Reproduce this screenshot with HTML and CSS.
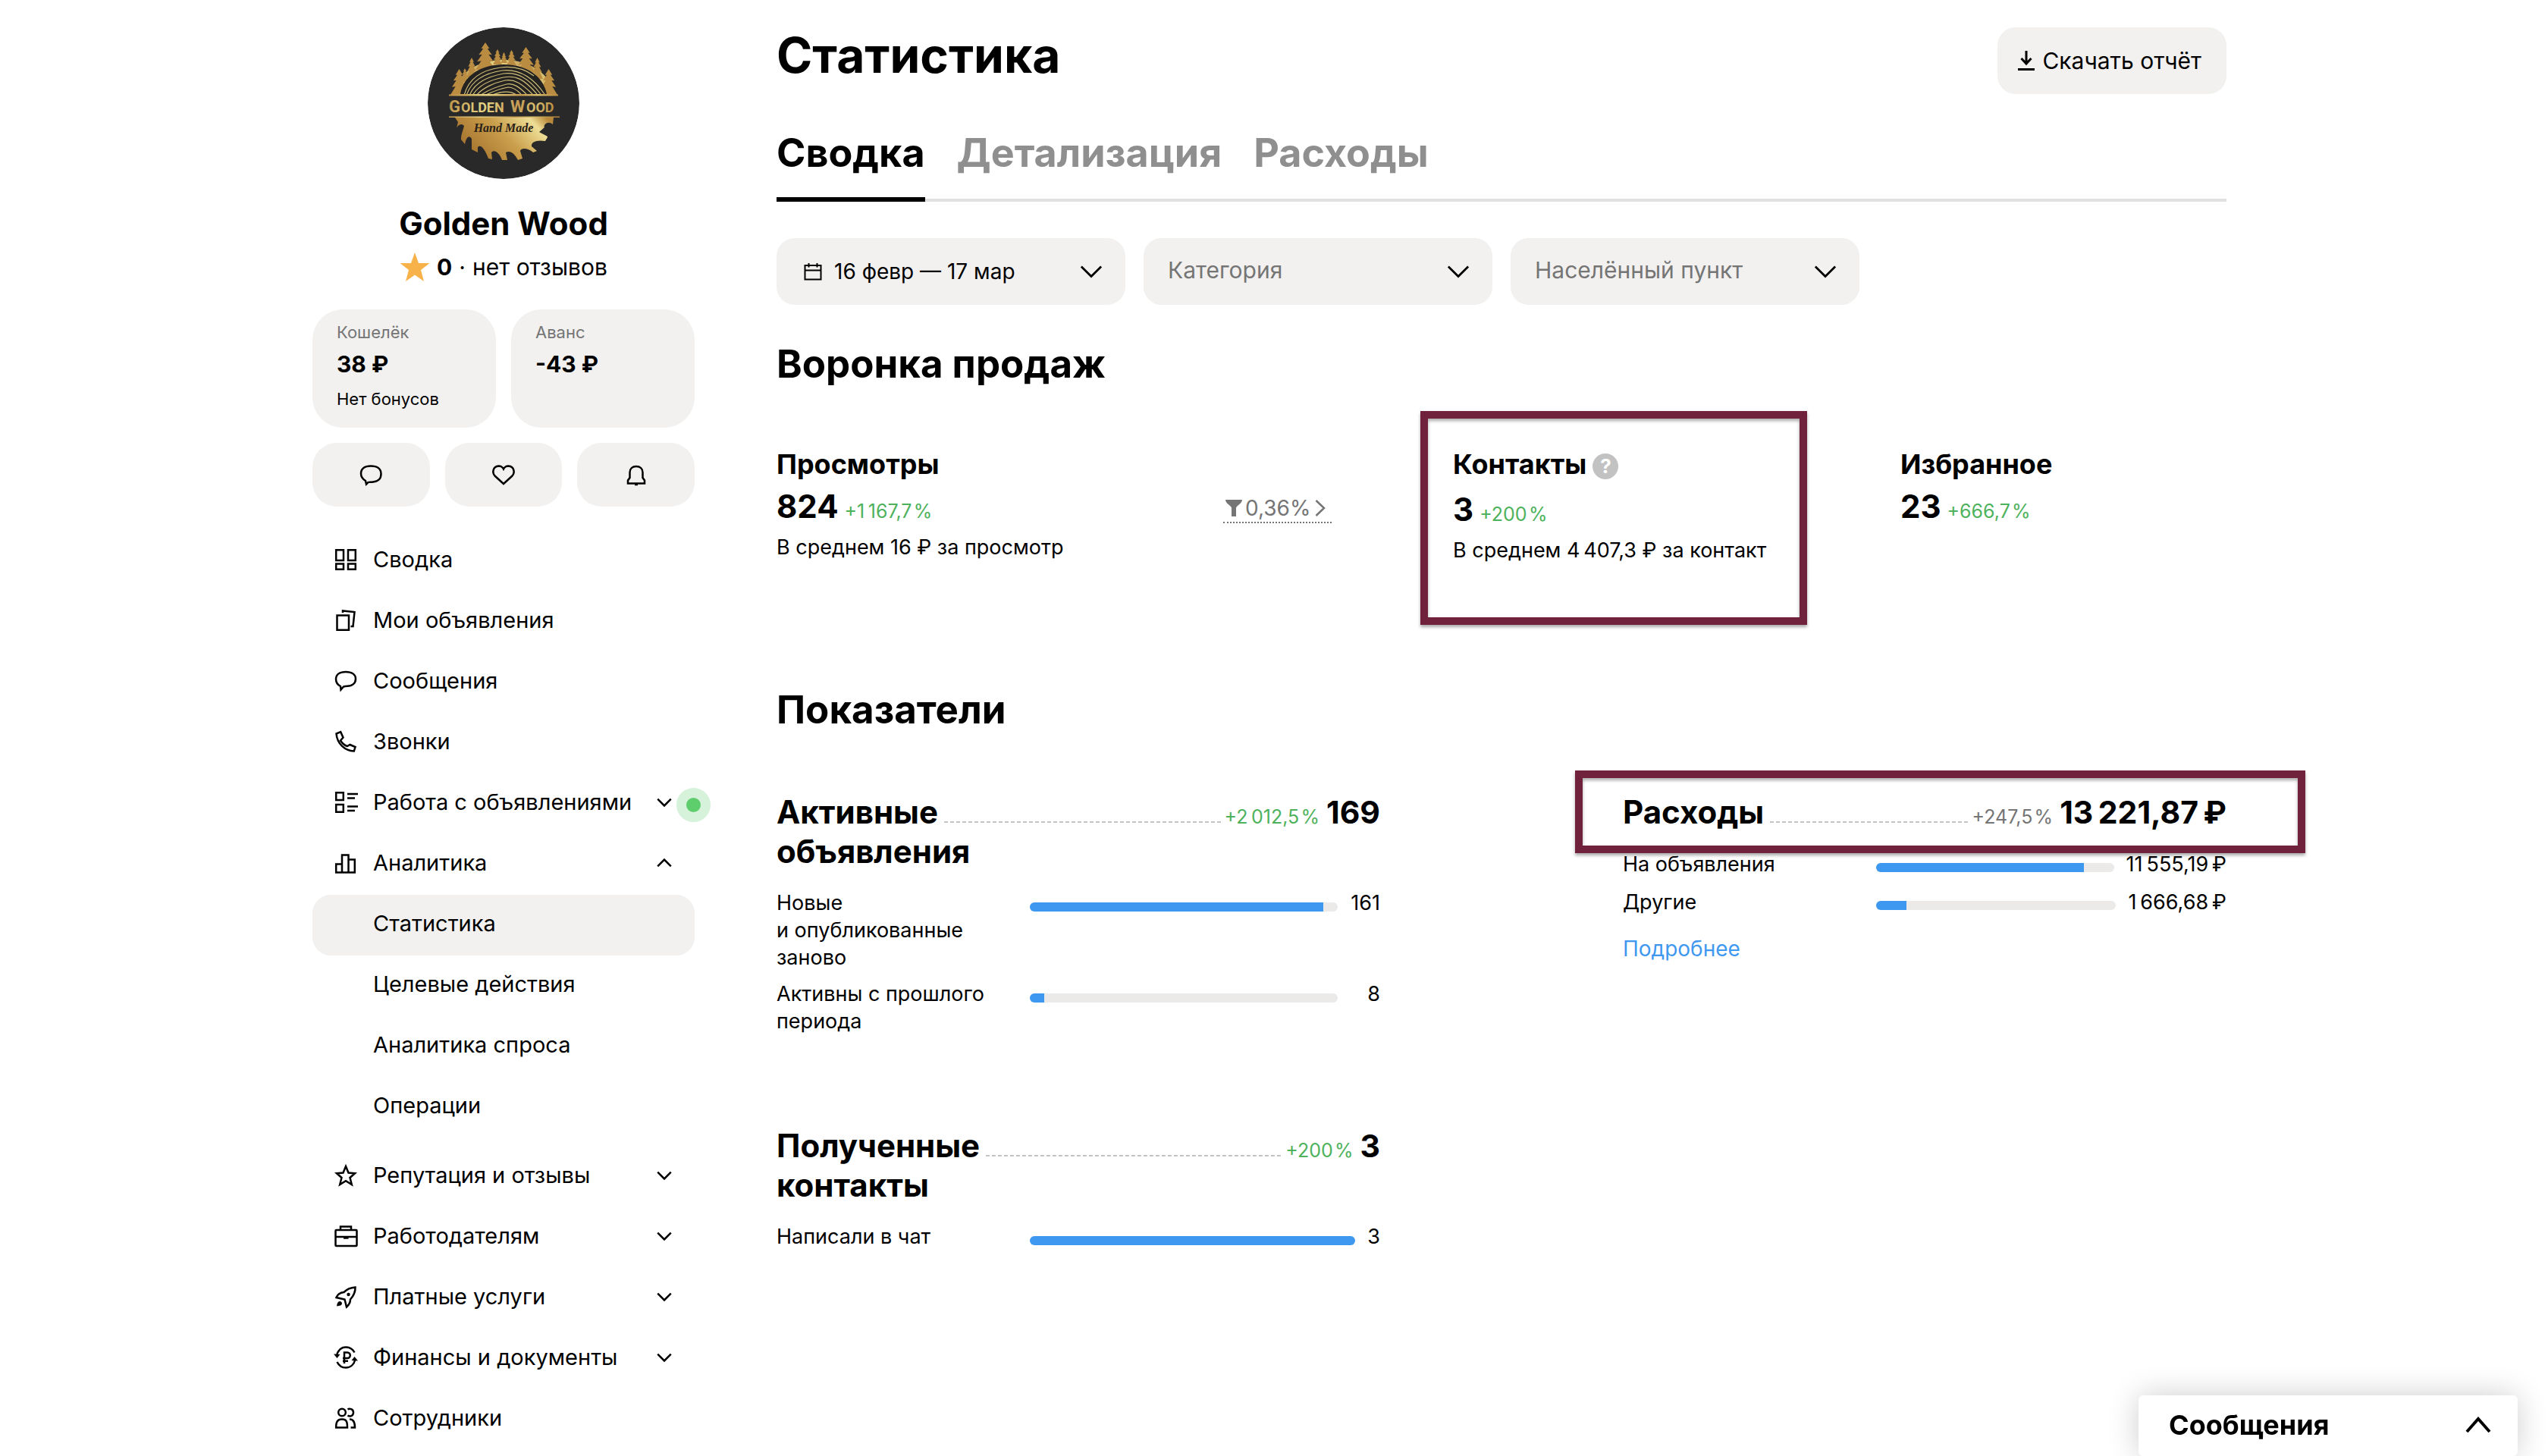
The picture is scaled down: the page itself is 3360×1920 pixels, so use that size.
FILE: index.html
```html
<!DOCTYPE html>
<html lang="ru">
<head>
<meta charset="utf-8">
<meta name="viewport" content="width=device-width, initial-scale=1">
<title>Статистика</title>
<link rel="stylesheet" href="styles.css">
</head>
<body>
<svg class="sprite" aria-hidden="true">
  <symbol id="i-bubble" viewBox="0 0 32 32"><path d="M9 23C5 21 3 17.500 3 13.500C3 7.500 8 4 16 4S29 7.500 29 13.200S24.500 22.800 18 22.800C16 22.800 14.500 23 13 23.500L9.500 27.500Z"/></symbol>
  <symbol id="i-down" viewBox="0 0 32 32"><path d="M2 9L16 23L30 9"/></symbol>
  <symbol id="tree" viewBox="0 0 24 40" preserveAspectRatio="none"><path d="M12 0L17 9L14.500 9L20 18L16 17.500L22 28L17 27L24 40H0L7 27L2 28L8 17.500L4 18L9.500 9L7 9Z"/></symbol>
</svg>
<div class="page">
  <aside class="sidebar">
    <svg class="avatar" viewBox="0 0 200 200" role="img" aria-label="Golden Wood Hand Made">
      <defs>
        <linearGradient id="gold" gradientUnits="userSpaceOnUse" x1="30" y1="70" x2="170" y2="110">
          <stop offset="0" stop-color="#b98c42"/><stop offset=".35" stop-color="#e6d584"/><stop offset=".65" stop-color="#c49a52"/><stop offset=".8" stop-color="#d9bf70"/><stop offset="1" stop-color="#b58438"/>
        </linearGradient>
        <linearGradient id="goldSaw" x1="0" y1="0.600" x2="1" y2="0.200">
          <stop offset="0" stop-color="#a3702c"/><stop offset=".5" stop-color="#c99e4b"/><stop offset=".85" stop-color="#eede95"/><stop offset="1" stop-color="#b98a3c"/>
        </linearGradient>
        <clipPath id="log"><path d="M43 88C47 64 70 49 100 49S152 64 157 88Z"/></clipPath>
      </defs>
      <circle cx="100" cy="100" r="100" fill="#292929"/>
      <g fill="url(#gold)">
        <path d="M34 90C38 60 66 43 100 43S162 60 167 90Z"/>
        <use href="#tree" x="63" y="20" width="26" height="36"/>
        <use href="#tree" x="117" y="26" width="25" height="34"/>
        <use href="#tree" x="86" y="29" width="12" height="20"/>
        <use href="#tree" x="96" y="33" width="9" height="14"/>
        <use href="#tree" x="104" y="30" width="13" height="20"/>
        <use href="#tree" x="51" y="40" width="14" height="26"/>
        <use href="#tree" x="137" y="40" width="15" height="28"/>
        <use href="#tree" x="44" y="54" width="10" height="18"/>
        <use href="#tree" x="30" y="55" width="23" height="34"/>
        <use href="#tree" x="148" y="55" width="23" height="34"/>
        <path d="M28 88.500H172V90.500H28ZM28 117.500H174V119H28Z"/>
      </g>
      <path d="M43 88C47 64 70 49 100 49S152 64 157 88Z" fill="#242321"/>
      <g clip-path="url(#log)" fill="none" stroke="#cfbd78" stroke-width="1.200">
        <path d="M48 90C54 66 74 56 96 53C112 51 128 55 140 64"/><path d="M51 90C58 68 78 60 98 57C116 55 136 62 154 88"/><path d="M55 90C62 72 80 65 100 61C118 59 132 66 149 88"/><path d="M59 90C67 76 84 69 100 66C116 63 127 68 144 88"/><path d="M64 90C72 80 88 73 102 70C114 68 124 74 138 88"/><path d="M69 90C80 82 92 78 104 75C113 73 121 79 130 88"/><path d="M75 90C87 84 96 81 106 79C113 79 118 83 123 88"/><path d="M83 90C95 85 108 83 117 89"/>
      </g>
      <g class="logo-name" fill="url(#gold)"><text x="28" y="112" font-size="22">G</text><text x="44" y="112" font-size="18">OLDEN</text><text x="109" y="112" font-size="22">W</text><text x="130" y="112" font-size="18">OOD</text></g>
      <path fill="url(#goldSaw)" d="M36 119H166L165 128C158 122 152 129 154 132L147 138C151 141 159 143 158 145L155 150C144 148 136 151 137 157L144 163L139 165C133 160 124 158 122 163L125 173L119 175C114 166 109 162 103 165L105 175H98C95 166 88 160 84 165L85 174L80 173C75 160 70 154 66 158V165L58 161V147C55 142 52 144 50 150L49 154L44 148C44 141 46 138 48 130C44 126 40 129 38 133L40 125Z"/>
      <text class="logo-script" x="100" y="138" text-anchor="middle" font-size="16" fill="#292118">Hand Made</text>
    </svg>
    <h2 class="seller">Golden Wood</h2>
    <p class="rating">
      <svg class="rating-star" viewBox="0 0 40 40" aria-hidden="true"><path d="M20 1L25 15H39.500L28 24L32 39L20 30.500L8 39L12 24L.5 15H15Z" fill="#f8b24a"/></svg>
      <b>0</b><span>·</span><span>нет отзывов</span>
    </p>
    <div class="wallets">
      <section class="wallet"><span class="wallet-label">Кошелёк</span><b class="wallet-sum">38 ₽</b><span class="wallet-note">Нет бонусов</span></section>
      <section class="wallet"><span class="wallet-label">Аванс</span><b class="wallet-sum">-43 ₽</b></section>
    </div>
    <div class="quick">
      <button type="button" aria-label="Сообщения"><svg class="icon" viewBox="0 0 32 32"><path d="M9 24C4 21 3 18 3 14.500C3 8 8 4.500 16 4.500S29.500 8 29.500 15S26 24.500 19 25.500C16 26 13.500 25.500 12.500 26L10 28.500Z"/></svg></button>
      <button type="button" aria-label="Избранное"><svg class="icon" viewBox="0 0 32 32"><path d="M16 28L4.500 17.500C.8 13.500 1.800 5 9.500 4.500C13 4.500 15 6.500 16 8.500C17 6.500 19 4.500 22.500 4.500C30.200 5 31.200 13.500 27.500 17.500Z"/></svg></button>
      <button type="button" aria-label="Уведомления"><svg class="icon" viewBox="0 0 32 32"><path d="M7.500 13C7.500 8 11 5 16 5S24.500 8 24.500 13V20L27 23.500V27.500H5V23.500L7.500 20Z"/><path d="M14 29H18"/></svg></button>
    </div>
    <nav class="menu" aria-label="Личный кабинет">
      <a href="#"><svg class="icon" viewBox="0 0 32 32"><path d="M3.200 3.200H13V17H3.200ZM19 3.200H28.800V17H19ZM3.200 21.500H13V28.800H3.200ZM19 21.500H28.800V28.800H19Z"/></svg><span>Сводка</span></a>
      <a href="#"><svg class="icon" viewBox="0 0 32 32"><path d="M4.500 9.500H20V28.800H4.500Z"/><path d="M12 6V3.500L27.500 5L25.500 24H22.500"/></svg><span>Мои объявления</span></a>
      <a href="#"><svg class="icon"><use href="#i-bubble"/></svg><span>Сообщения</span></a>
      <a href="#"><svg class="icon" viewBox="0 0 32 32"><path d="M3.500 5.500L9.200 3.200L12.500 10.500L9 14.500C11.500 18.500 14.500 21 18 22L21.500 20L28.500 23L26.800 28.500C15 28 4.500 19 3.500 5.500Z"/></svg><span>Звонки</span></a>
      <a href="#"><svg class="icon" viewBox="0 0 32 32"><path d="M3.200 3.200H12.800V13H3.200ZM3.200 19H12.800V28.800H3.200ZM18 5H32M18 10.500H28M18 21.500H32M18 27H28"/></svg><span>Работа с объявлениями</span><svg class="chev"><use href="#i-down"/></svg><i class="pulse"></i></a>
      <a href="#"><svg class="icon" viewBox="0 0 32 32"><path d="M11 28.500H3.200V17.500H11M11 28.500V5.500H19.500V28.500ZM19.500 11.500H27.800V28.500H19.500"/></svg><span>Аналитика</span><svg class="chev up"><use href="#i-down"/></svg></a>
      <div class="submenu">
        <a class="active" href="#" aria-current="page">Статистика</a>
        <a href="#">Целевые действия</a>
        <a href="#">Аналитика спроса</a>
        <a href="#">Операции</a>
      </div>
      <a href="#"><svg class="icon" viewBox="0 0 32 32"><path d="M16 4L19.500 12.500L28 13.200L21.500 19L23.800 28L16 23.200L8.200 28L10.500 19L4 13.200L12.500 12.500Z"/></svg><span>Репутация и отзывы</span><svg class="chev"><use href="#i-down"/></svg></a>
      <a href="#"><svg class="icon" viewBox="0 0 32 32"><rect x="2.500" y="8" width="28" height="21" rx="1"/><path d="M9 8V3.500H23V8M2.500 17H30.500M13 18.500H19.500"/></svg><span>Работодателям</span><svg class="chev"><use href="#i-down"/></svg></a>
      <a href="#"><svg class="icon" viewBox="0 0 32 32"><path d="M28.500 3.500C22 4 18 5.500 13.500 10C9 10.500 5 13 3.500 17L14.500 19.500L17 29.500C21 26 22 22.500 22 19.500C26.500 14.500 28.800 10 28.500 3.500Z"/><path class="solid" d="M8 22C12 22.500 11.500 26.500 9 27.500L4 28.500C4.500 25.500 5 22.500 8 22Z"/><circle class="solid" cx="19.500" cy="13" r="2.200"/></svg><span>Платные услуги</span><svg class="chev"><use href="#i-down"/></svg></a>
      <a href="#"><svg class="icon" viewBox="0 0 32 32"><path d="M4 14C5 7 10 2.500 16 2.500C21 2.500 25 5 27.500 9.500M28.500 18.500C27 25 22.500 29.500 16 29.500C10.500 29.500 7 27 4.500 22"/><path d="M14 24V9.500H18C23 9.500 23 17 18 17H12M12 20.800H19"/><path class="solid" d="M0 11.500L8.500 12L4.500 17ZM32 20.500L23.500 20L27.500 15Z"/></svg><span>Финансы и документы</span><svg class="chev"><use href="#i-down"/></svg></a>
      <a href="#"><svg class="icon" viewBox="0 0 32 32"><circle cx="11" cy="8.500" r="4.800"/><path d="M3.200 28.500C3 21 5 17.500 11 17.500S18 21 18 28.500ZM18.500 4.500C20.500 3 26 3.500 26 8.500C26 13.500 21 14.500 18.500 12.500M21 17.500C26 17.500 28 21 28 28.500H22.500"/></svg><span>Сотрудники</span></a>
    </nav>
  </aside>

  <main class="main">
    <header class="top">
      <h1>Статистика</h1>
      <button class="download" type="button"><svg class="icon-dl" viewBox="0 0 22 28" aria-hidden="true"><path d="M11 1V18M4.500 11L11 18L17.500 11M0 25.500H22"/></svg>Скачать отчёт</button>
    </header>
    <nav class="tabs" aria-label="Разделы статистики"><a class="current" href="#" aria-current="page">Сводка</a><a href="#">Детализация</a><a href="#">Расходы</a></nav>
    <div class="filters">
      <button class="filter filter-date" type="button"><svg class="icon-cal" viewBox="0 0 24 24" aria-hidden="true"><path d="M1.500 4H22.500V22.500H1.500ZM1.500 10.500H22.500M6.500 1V6.500M17.500 1V6.500"/></svg><span>16 февр — 17 мар</span><svg class="arrow"><use href="#i-down"/></svg></button>
      <label class="filter"><select aria-label="Категория"><option>Категория</option></select><svg class="arrow"><use href="#i-down"/></svg></label>
      <label class="filter"><select aria-label="Населённый пункт"><option>Населённый пункт</option></select><svg class="arrow"><use href="#i-down"/></svg></label>
    </div>

    <h2>Воронка продаж</h2>
    <div class="funnel">
      <section class="step">
        <h3>Просмотры</h3>
        <p class="figure"><b>824</b><span class="delta">+1&thinsp;167,7&hairsp;%</span></p>
        <p class="note">В среднем 16 ₽ за просмотр</p>
      </section>
      <a class="conversion" href="#"><svg class="icon-funnel" viewBox="0 0 22 22" aria-hidden="true"><path d="M0 0H22C22 5 14 8 14 11V22H8V11C8 8 0 5 0 0Z"/></svg>0,36%<svg class="icon-next" viewBox="0 0 14 22" aria-hidden="true"><path d="M1.500 1L12 11L1.500 21"/></svg></a>
      <section class="step marked">
        <h3>Контакты <button class="help" type="button" aria-label="Подсказка">?</button></h3>
        <p class="figure"><b>3</b><span class="delta">+200&hairsp;%</span></p>
        <p class="note">В среднем 4&thinsp;407,3 ₽ за контакт</p>
      </section>
      <section class="step">
        <h3>Избранное</h3>
        <p class="figure"><b>23</b><span class="delta">+666,7&hairsp;%</span></p>
      </section>
    </div>

    <h2>Показатели</h2>
    <div class="metrics">
      <div class="column">
        <section class="metric">
          <div class="metric-head"><h3><span>Активные</span> <span class="second">объявления</span></h3><i class="leader"></i><span class="delta">+2&thinsp;012,5&hairsp;%</span><b>169</b></div>
          <div class="row"><span class="row-label">Новые и&nbsp;опубликованные заново</span><span class="bar"><i style="width:95.3%"></i></span><span class="row-value">161</span></div>
          <div class="row"><span class="row-label">Активны с&nbsp;прошлого периода</span><span class="bar"><i style="width:4.7%"></i></span><span class="row-value">8</span></div>
        </section>
        <section class="metric">
          <div class="metric-head"><h3><span>Полученные</span> <span class="second">контакты</span></h3><i class="leader"></i><span class="delta">+200&hairsp;%</span><b>3</b></div>
          <div class="row"><span class="row-label">Написали в чат</span><span class="bar"><i style="width:100%"></i></span><span class="row-value short">3</span></div>
        </section>
      </div>
      <div class="column">
        <section class="metric money">
          <div class="metric-head marked-line"><h3><span>Расходы</span></h3><i class="leader"></i><span class="delta muted">+247,5&hairsp;%</span><b>13&thinsp;221,87&thinsp;₽</b></div>
          <div class="row"><span class="row-label">На объявления</span><span class="bar"><i style="width:87.4%"></i></span><span class="row-value">11&thinsp;555,19&thinsp;₽</span></div>
          <div class="row"><span class="row-label">Другие</span><span class="bar"><i style="width:12.6%"></i></span><span class="row-value">1&thinsp;666,68&thinsp;₽</span></div>
          <a class="more" href="#">Подробнее</a>
        </section>
      </div>
    </div>
  </main>
</div>
<button class="chat" type="button"><span>Сообщения</span><svg class="chat-arrow" viewBox="0 0 34 22" aria-hidden="true"><path d="M2 20L17 3L32 20"/></svg></button>
</body>
</html>
```
FILE: styles.css
```css
*, *::before, *::after { box-sizing: border-box; }
body { margin: 0; background: #fff; color: #000; font-family: Inter, "Noto Sans", sans-serif; font-size: 28px; line-height: 36px; }
h1, h2, h3, p { margin: 0; }
a { color: inherit; text-decoration: none; }
b { font-weight: 700; }
button, select { font: inherit; color: inherit; border: 0; margin: 0; background: #f2f1f0; cursor: pointer; }
.sprite { position: absolute; width: 0; height: 0; }
svg { fill: none; stroke: none; flex: none; display: block; }

.page { display: flex; align-items: flex-start; gap: 108px; padding: 36px 424px 0 412px; }
.sidebar { flex: 0 0 504px; }
.main { flex: 1; min-width: 0; }

.icon { width: 32px; height: 32px; stroke: #000; stroke-width: 2.5; }
.icon .solid { fill: #000; stroke: none; }

/* profile */
.avatar { width: 200px; height: 200px; margin: 0 auto 32px; border-radius: 50%; }
.logo-name { font-family: Roboto, sans-serif; font-weight: 700; }
.logo-script { font-family: "Liberation Serif", serif; font-weight: 700; font-style: italic; }
.seller { font-size: 42px; line-height: 54px; text-align: center; font-weight: 700; }
.rating { display: flex; justify-content: center; align-items: center; gap: 9px; margin: 12px 0 38px; font-size: 30px; }
.rating-star { width: 40px; height: 40px; margin: -2px 0; }

.wallets, .quick { display: flex; gap: 20px; }
.wallet { flex: 1; display: flex; flex-direction: column; min-height: 156px; padding: 16px 32px 24px; border-radius: 40px; background: #f2f1f0; }
.wallet-label, .wallet-note { font-size: 22px; line-height: 28px; }
.wallet-label { color: #757575; }
.wallet-sum { margin: 8px 0 12px; font-size: 30px; line-height: 40px; }
.quick { margin: 20px 0 32px; }
.quick button { flex: 1; display: flex; align-items: center; justify-content: center; height: 84px; border-radius: 32px; }

/* menu */
.menu a { position: relative; display: flex; align-items: center; gap: 20px; height: 80px; padding: 0 30px 4px 28px; font-size: 29px; border-radius: 24px; }
.menu .submenu { margin-bottom: 12px; }
.menu .submenu a { padding-left: 80px; }
.menu .submenu .active { background: #f2f1f0; }
.chev { width: 20px; height: 20px; margin-left: auto; stroke: #000; stroke-width: 4; }
.up { transform: rotate(180deg); }
.pulse { position: absolute; right: -21px; top: 19px; width: 45px; height: 45px; border: 13px solid #d6f2da; border-radius: 50%; background: #5ecd6c; }

/* heading and tabs */
.top { display: flex; justify-content: space-between; align-items: flex-start; }
h1 { font-size: 64px; line-height: 74px; }
.download { display: flex; align-items: center; gap: 10px; height: 88px; padding: 0 33px 0 27px; border-radius: 24px; font-size: 30px; }
.icon-dl { width: 22px; height: 28px; stroke: #000; stroke-width: 3; }
.tabs { display: flex; gap: 42px; margin: 48px 0; box-shadow: inset 0 -4px #e1e1e1; }
.tabs a { padding-bottom: 28px; border-bottom: 6px solid transparent; font-size: 52px; line-height: 60px; font-weight: 700; color: #8f8f8f; }
.tabs .current { color: #000; border-color: #000; }

.filters { display: flex; gap: 24px; margin-bottom: 48px; }
.filter { position: relative; width: 460px; height: 88px; border-radius: 24px; background: #f2f1f0; }
.filter select { width: 100%; height: 100%; padding: 0 72px 4px 32px; border-radius: 24px; appearance: none; color: #757575; font-size: 30px; }
.filter-date { display: flex; align-items: center; gap: 16px; padding: 0 72px 0 36px; }
.icon-cal { width: 24px; height: 24px; stroke: #000; stroke-width: 2; }
.arrow { position: absolute; right: 30px; top: 29px; width: 30px; height: 30px; stroke: #000; stroke-width: 3; pointer-events: none; }

h2 { font-size: 51px; line-height: 60px; }

/* sales funnel */
.funnel { display: grid; grid-template-columns: 589fr 303fr 590fr 430fr; align-items: start; margin: 80px 0 162px; }
.step h3 { display: flex; align-items: flex-start; gap: 8px; min-height: 44px; font-size: 36px; line-height: 44px; }
.figure { display: flex; align-items: baseline; gap: 8px; margin: 8px 0 10px; line-height: 52px; }
.figure b { font-size: 42px; }
.delta { font-size: 25px; line-height: 28px; color: #4eb25c; white-space: nowrap; }
.delta.muted { color: #757575; }
.note { font-size: 27px; white-space: nowrap; }
.help { width: 34px; height: 34px; margin-top: 8px; padding: 0; border-radius: 50%; background: #c2c2c2; color: #fff; font-size: 26px; line-height: 34px; font-weight: 700; }
.marked { position: relative; }
.marked h3 { min-height: 48px; }
.marked::after, .marked-line::after { content: ""; position: absolute; border: 10px solid #70223c; box-shadow: 0 3px 4px #0005, inset 0 3px 4px #0005; pointer-events: none; }
.marked::after { left: -43px; top: -48px; width: 510px; height: 282px; }
.conversion { display: flex; align-items: center; justify-self: start; gap: 4px; margin-top: 62px; padding: 0 8px 0 3px; border-bottom: 2px dotted #757575; color: #757575; }
.icon-funnel { width: 22px; height: 22px; fill: #757575; }
.icon-next { width: 14px; height: 22px; margin-left: 2px; stroke: #757575; stroke-width: 2.5; }

/* indicators */
.metrics { display: grid; grid-template-columns: 1fr 1fr; gap: 320px; margin-top: 79px; }
.metric + .metric { margin-top: 120px; }
.metric-head { position: relative; display: flex; flex-wrap: wrap; align-items: baseline; margin-bottom: 24px; font-size: 42px; line-height: 52px; font-weight: 700; }
.metric-head h3 { display: contents; font-size: inherit; }
.metric-head b { font-size: 41px; }
.metric-head .second { order: 1; flex: 0 0 100%; }
.metric-head .delta { font-weight: 400; margin-right: 9px; }
.leader { flex: 1; height: 3px; margin: 0 4px 0 8px; background: repeating-linear-gradient(90deg, #c4c4c4 0 5px, #fff 5px 8px) top / 100% 2px no-repeat; }
.marked-line::after { left: -63px; right: -104px; top: -29px; height: 109px; }
.row { display: flex; align-items: flex-start; font-size: 27px; }
.row + .row { margin-top: 12px; }
.row-label { flex: 0 0 334px; padding-right: 40px; }
.bar { flex: 1; height: 12px; margin: 17px 16px 0 0; border-radius: 6px; background: #ebeae9; overflow: hidden; }
.bar i { display: block; height: 100%; background: #3f98ef; }
.row-value { min-width: 40px; text-align: right; white-space: nowrap; }
.row-value.short { min-width: 16px; }
.money .row { line-height: 38px; }
.more { display: inline-block; margin-top: 24px; color: #3f98ef; }

/* messenger */
.chat { position: fixed; right: 40px; bottom: 0; display: flex; justify-content: space-between; align-items: center; width: 500px; height: 80px; padding: 0 35px 2px 40px; border-radius: 6px; background: #fff; box-shadow: 0 0 40px #0003; font-size: 36px; font-weight: 700; }
.chat-arrow { width: 34px; height: 22px; stroke: #000; stroke-width: 4; }
```
